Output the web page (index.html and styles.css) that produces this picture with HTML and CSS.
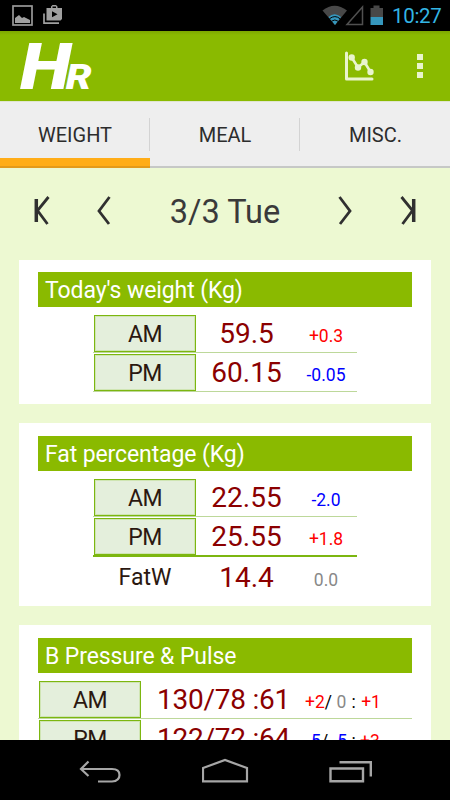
FILE: index.html
```
<!DOCTYPE html>
<html lang="en">
<head>
    <meta charset="UTF-8">
    <meta name="viewport" content="width=device-width, initial-scale=1.0">
    <title>HR - Health Record</title>
    <link rel="stylesheet" href="styles.css">
</head>
<body>
    <div class="status-bar">
        <svg class="notifications" width="52" height="24" viewBox="0 0 52 24">
            <rect x="1" y="2" width="19" height="19" fill="none" stroke="#999" stroke-width="1.7"/>
            <path d="M3 19v-5l4-3 3 3 2-1 6 3v3z" fill="#a0a0a0"/>
            <path d="M32 9.500V19.200H47" fill="none" stroke="#a0a0a0" stroke-width="1.700"/>
            <path d="M34.500 4H39V2.500L40.500 1h3.500L45.500 2.500V4H50V15l-1.500 1.500h-14zM40.500 4H44V2.500h-3.500zM40 7.300v6l5.500-3z" fill="#a0a0a0" fill-rule="evenodd"/>
        </svg>
        <svg class="signals" width="64" height="24" viewBox="0 0 64 24">
            <path d="M0.500 6.500Q12.500-3 25 6.500L13 21z" fill="#484848"/>
            <path d="M6.500 13Q12.500 7.500 19 13L13 21z" fill="#3597bd"/>
            <path d="M7.500 14.700Q13 10.500 18 14.700M9.500 17.200Q13 14.700 16 17.200" fill="none" stroke="#000" stroke-width="1"/>
            <path d="M25 20.500H40.500V3z" fill="none" stroke="#505050" stroke-width="1.500"/>
            <path d="M48.500 4H51.500V1.500H57.500V4H61V13H48.500z" fill="#484848"/>
            <path d="M48.500 13H61v8H48.500z" fill="#3597bd"/>
        </svg>
        <span class="clock">10:27</span>
    </div>

    <header class="app-bar">
        <div class="logo">H<span>R</span></div>
        <svg class="chart-icon" width="32" height="32" viewBox="0 0 32 32">
            <path d="M3.500 3V29H29" fill="none" stroke="#e9f4cd" stroke-width="3" stroke-linecap="round" stroke-linejoin="round"/>
            <path d="M8.700 7.500L15 17.500 21.500 12 27.500 22" fill="none" stroke="#e9f4cd" stroke-width="2.600"/>
            <g fill="#e9f4cd">
                <circle cx="8.700" cy="7.500" r="3.200"/>
                <circle cx="15" cy="17.500" r="3.200"/>
                <circle cx="21.500" cy="12" r="3.200"/>
                <circle cx="27.500" cy="22" r="3.200"/>
            </g>
        </svg>
        <div class="menu-dots"><i></i><i></i><i></i></div>
    </header>

    <nav class="tabs">
        <div class="tab active"><span>WEIGHT</span></div>
        <div class="tab"><span>MEAL</span></div>
        <div class="tab"><span>MISC.</span></div>
    </nav>

    <main class="content">
        <div class="date-nav">
            <svg class="first" width="18" height="32" viewBox="0 0 18 32"><path d="M3.300 4V27" stroke-width="3.500"/><path d="M15.500 2L4.500 15.500 14.500 29"/></svg>
            <svg width="18" height="32" viewBox="0 0 18 32"><path d="M15.500 2L5 16 15 29"/></svg>
            <span class="date">3/3 Tue</span>
            <svg width="18" height="32" viewBox="0 0 18 32"><path d="M3.500 2L14 16 4 29"/></svg>
            <svg class="latest" width="18" height="32" viewBox="0 0 18 32"><path d="M14.700 4V27" stroke-width="3.500"/><path d="M2.500 2L13.500 15.500 3.500 29"/></svg>
        </div>

        <section class="card">
            <h2>Today's weight (Kg)</h2>
            <div class="rows">
                <div class="row"><button>AM</button><span class="value">59.5</span><span class="diff up">+0.3</span></div>
                <div class="row"><button>PM</button><span class="value">60.15</span><span class="diff down">-0.05</span></div>
            </div>
        </section>

        <section class="card fat">
            <h2>Fat percentage (Kg)</h2>
            <div class="rows">
                <div class="row"><button>AM</button><span class="value">22.55</span><span class="diff down">-2.0</span></div>
                <div class="row last"><button>PM</button><span class="value">25.55</span><span class="diff up">+1.8</span></div>
                <div class="row total"><span class="label">FatW</span><span class="value">14.4</span><span class="diff same">0.0</span></div>
            </div>
        </section>

        <section class="card pressure">
            <h2>B Pressure &amp; Pulse</h2>
            <div class="rows wide">
                <div class="row"><button>AM</button><span class="value">130/78 :61</span><span class="diff"><b class="up">+2</b>/ <b class="same">0</b> <em>:</em> <b class="up">+1</b></span></div>
                <div class="row"><button>PM</button><span class="value">122/72 :64</span><span class="diff"><b class="down">-5</b>/ <b class="down">-5</b> : <b class="up">+3</b></span></div>
            </div>
        </section>
    </main>

    <footer class="nav-bar">
        <svg width="44" height="26" viewBox="0 0 44 26"><path d="M20 23.500H34Q41.500 23 41.500 17T34 11H3M10.500 3.500L3 11l7.500 7" fill="none" stroke="#a6a6a6" stroke-width="2.200"/></svg>
        <svg width="48" height="26" viewBox="0 0 48 26"><path d="M1 23.300V10L23 2 45 10V23.300z" fill="none" stroke="#a6a6a6" stroke-width="2.200"/></svg>
        <svg width="44" height="26" viewBox="0 0 44 26"><path d="M1.500 10.500H34V23.300H1.500zM10.500 4.300H41.800V18.500" fill="none" stroke="#a6a6a6" stroke-width="2.400"/></svg>
    </footer>
</body>
</html>
```
FILE: styles.css
```
* {
    box-sizing: border-box;
}
body {
    margin: 0;
    height: 800px;
    display: flex;
    flex-direction: column;
    overflow: hidden;
    font-family: Roboto, sans-serif;
    background: #edf9d2;
}
.status-bar {
    height: 31px;
    flex: none;
    display: flex;
    align-items: flex-start;
    padding: 4px 8px 0 12px;
    background: #000;
}
.signals {
    margin-left: auto;
}
.clock {
    margin-left: 6px;
    width: 50px;
    color: #33b5e5;
    font-size: 20.5px;
    line-height: 24px;
    letter-spacing: -0.3px;
    white-space: nowrap;
}
.app-bar {
    height: 70px;
    flex: none;
    display: flex;
    align-items: center;
    padding: 0 25px 0 20px;
    background: linear-gradient(#7da800, #8aba00 4px);
}
.logo {
    padding-top: 13px;
    color: #fff;
    font-size: 64px;
    line-height: 70px;
    font-weight: 900;
    font-style: italic;
    transform: scaleX(1.17);
    transform-origin: left;
}
.logo span {
    font-size: 35px;
    margin-left: -4.5px;
}
.chart-icon {
    margin: 0 42px 0 auto;
}
.menu-dots {
    display: grid;
    gap: 3px;
    margin-right: 2px;
}
.menu-dots i {
    width: 6px;
    height: 6px;
    background: #e9f4cd;
}
.tabs {
    height: 67px;
    flex: none;
    display: flex;
    background: #eee;
    border-top: 1px solid #e0e5d0;
}
.tab {
    flex: 1;
    padding-top: 16px;
    border-bottom: 2px solid #c6c8c6;
}
.tab span {
    display: block;
    height: 33px;
    padding-left: 1px;
    line-height: 35px;
    text-align: center;
    font-size: 20px;
    color: #2c2c2c;
    border-right: 1px solid #d3d3d3;
}
.tab:last-child span {
    border-right: none;
}
.tab.active {
    border-bottom: 2px solid #e39b1b;
    box-shadow: inset 0 -8px #ffad18;
}
.content {
    flex: 1;
    min-height: 0;
    overflow: hidden;
    padding: 0 19px;
}
.date-nav {
    height: 92px;
    display: flex;
    align-items: center;
    padding: 0 14px 6px;
}
.date-nav svg {
    flex: none;
    fill: none;
    stroke: #303030;
    stroke-width: 2.8;
}
.date-nav .first {
    margin-right: 43px;
}
.date-nav .latest {
    margin-left: 45px;
}
.date {
    width: 224px;
    padding: 2px 0 0 2px;
    text-align: center;
    font-size: 32.5px;
    color: #3a3a3a;
}
.card {
    height: 144px;
    margin-bottom: 19px;
    padding: 12px 19px 0;
    background: #fff;
}
.card.fat {
    height: 183px;
    padding-top: 13px;
}
.card.pressure {
    padding-top: 13px;
}
.card h2 {
    margin: 0 0 7px;
    height: 35px;
    padding-left: 7px;
    line-height: 37px;
    background: #8aba00;
    color: #fff;
    font-size: 23px;
    font-weight: 400;
    letter-spacing: -0.1px;
}
.rows {
    width: 264px;
    margin: 0 auto;
}
.row {
    height: 39px;
    display: grid;
    grid-template-columns: 104px 99px 60px;
    align-items: end;
    padding-top: 1px;
    border-bottom: 1px solid #bdd89a;
    text-align: center;
}
.row button {
    height: 37px;
    width: 102px;
    margin-left: 1px;
    padding: 2px 0 0;
    border: 1px solid #7cb610;
    outline: 1px solid #cfe5b3;
    outline-offset: -2px;
    background: #e4efdc;
    color: #2b1810;
    font-family: inherit;
    font-size: 23px;
    letter-spacing: -0.5px;
}
.value {
    color: #8b0000;
    font-size: 28px;
    line-height: 37px;
    white-space: nowrap;
}
.diff {
    font-size: 17.5px;
    line-height: 31px;
    white-space: nowrap;
}
.diff b {
    font-weight: 400;
}
.diff em {
    font-style: normal;
    margin: 0 1px;
}
.up {
    color: #f00;
}
.down {
    color: #00f;
}
.same {
    color: #888;
}
.row.last {
    height: 40px;
    border-bottom: 2px solid #7cb610;
}
.row.total {
    height: 39px;
    border-bottom: none;
}
.label {
    color: #2b1810;
    font-size: 23px;
    line-height: 37px;
}
.rows.wide {
    width: 374px;
}
.wide .row {
    grid-template-columns: 104px 163px 76px;
}
.wide .value {
    letter-spacing: -0.25px;
}
.nav-bar {
    height: 60px;
    flex: none;
    display: flex;
    align-items: center;
    justify-content: space-between;
    padding: 2px 77px 0 78px;
    background: #000;
}
```
